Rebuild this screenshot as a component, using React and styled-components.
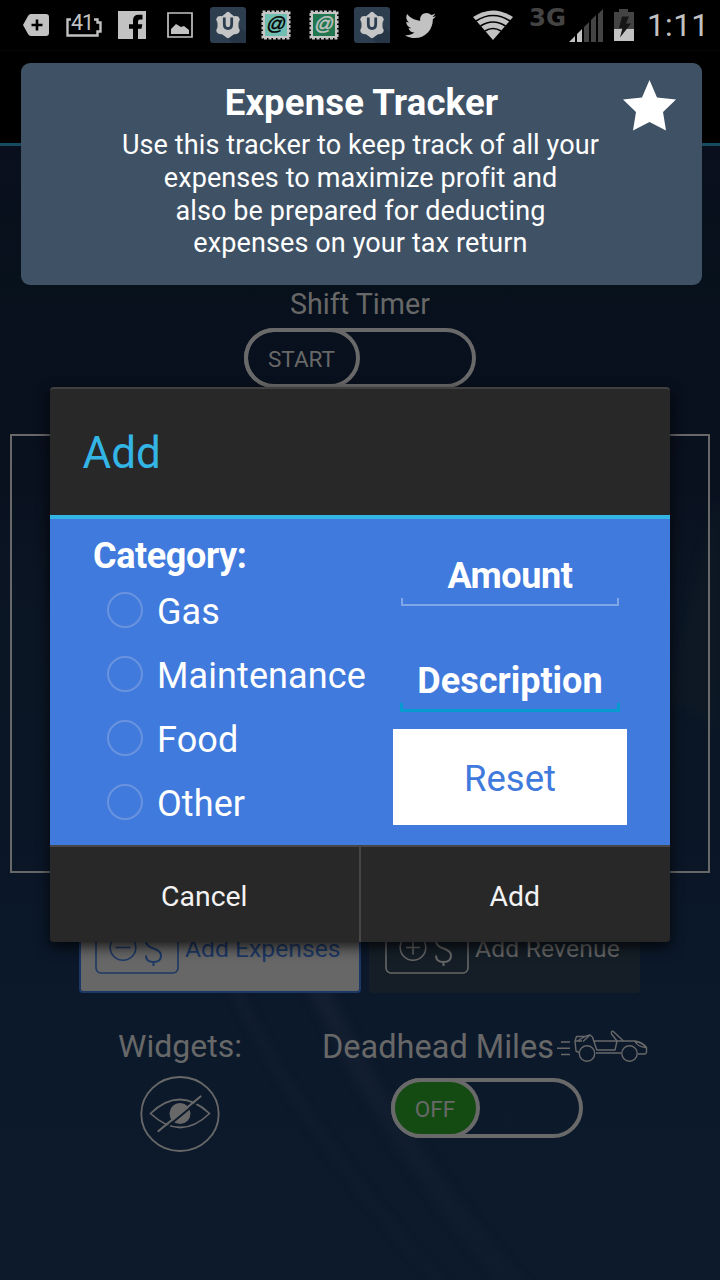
import React from "react";
import styled, { createGlobalStyle } from "styled-components";
import { FaTwitter } from "react-icons/fa";

const GlobalStyle = createGlobalStyle`
  *, *::before, *::after { box-sizing: border-box; }
  body { margin: 0; background: #000; font-family: Roboto, "Liberation Sans", sans-serif; }
  button { font-family: inherit; margin: 0; padding: 0; border: 0; background: none; }
  h1, h2, p { margin: 0; }
  svg { display: block; flex: none; }
`;

const Screen = styled.div`
  position: relative;
  display: flex;
  flex-direction: column;
  width: 720px;
  height: 1280px;
  overflow: hidden;
  background: #000;
`;

/* ---------- status bar ---------- */
const StatusBar = styled.header`
  display: flex;
  align-items: center;
  height: 51px;
  padding-left: 12px;
  border-bottom: 1px solid #070707;
  color: #c2c2c2;
`;
const StatusSlot = styled.span`
  display: flex;
  justify-content: center;
  width: 48px;
`;
const SystemIcons = styled.div`
  display: flex;
  align-items: center;
  margin-left: 29px;
`;
const IconGap = styled.span`
  width: ${(p) => p.$size}px;
`;
const Clock = styled.time`
  margin-left: 12px;
  font-size: 31.5px;
  line-height: 50px;
  font-weight: 400;
  letter-spacing: 0.4px;
  padding-top: 1px;
`;

/* ---------- page behind the dialog ---------- */
const ActionBar = styled.div`
  height: 95px;
  border-bottom: 3px solid #154a60;
`;
const Page = styled.main`
  position: relative;
  isolation: isolate;
  flex: 1;
  display: flex;
  flex-direction: column;
  align-items: center;
  padding-top: 142px;
  background: linear-gradient(#0a0f1d 0, #07111c 130px, #09101e 300px, #0b1624 480px, #0a1626 690px, #0c192b 860px, #0c1a2b 100%);
  color: #686868;
`;
const Backdrop = styled.svg`
  position: absolute;
  inset: 0;
  z-index: -1;
`;
const TimerLabel = styled.h2`
  font-size: 28.7px;
  line-height: 33px;
  font-weight: 400;
`;
const Toggle = styled.div`
  width: ${(p) => p.$width}px;
  height: 60px;
  margin-top: ${(p) => p.$top}px;
  border: 4px solid #696969;
  border-radius: 30px;
`;
const Knob = styled.div`
  display: flex;
  align-items: center;
  justify-content: center;
  width: ${(p) => p.$width}px;
  height: 60px;
  margin: -4px;
  padding: 2px 1px 0 0;
  border: 4px solid #696969;
  border-radius: 30px;
  background: ${(p) => p.$fill || "transparent"};
  font-size: 22.5px;
`;
const ListFrame = styled.section`
  width: 700px;
  height: 439px;
  margin-top: 46px;
  border: 2px solid #686868;
`;
const EntryButtons = styled.div`
  display: flex;
  gap: 8px;
  width: 561px;
  height: 88px;
  margin: 32px 1px 0 0;
`;
const EntryButton = styled.button`
  display: flex;
  align-items: center;
  gap: 6px;
  width: ${(p) => (p.$active ? 282 : 271)}px;
  padding-left: ${(p) => (p.$active ? 14 : 16)}px;
  border: ${(p) => (p.$active ? "2px solid #1b3765" : "0")};
  border-radius: 4px;
  background: ${(p) => (p.$active ? "#676767" : "#151e27")};
  color: ${(p) => (p.$active ? "#1c3866" : "#676767")};
  font-size: 24.7px;
  letter-spacing: ${(p) => (p.$active ? 0 : 0.15)}px;
`;
const EntryLabel = styled.span`
  padding-bottom: 2px;
`;
const Widgets = styled.div`
  display: flex;
  width: 720px;
  padding-top: 31px;
`;
const WidgetColumn = styled.div`
  display: flex;
  flex-direction: column;
  align-items: center;
  width: ${(p) => p.$width}px;
`;
const WidgetTitle = styled.h2`
  display: flex;
  align-items: center;
  gap: 2px;
  height: 44px;
  padding-top: ${(p) => p.$drop || 0}px;
  margin-bottom: ${(p) => p.$below || 0}px;
  margin-right: ${(p) => p.$shift || 0}px;
  white-space: nowrap;
  font-size: ${(p) => p.$size}px;
  font-weight: 400;
`;

/* ---------- overlays ---------- */
const Toast = styled.aside`
  position: absolute;
  left: 21px;
  top: 63px;
  width: 681px;
  height: 222px;
  padding-top: 19px;
  border-radius: 9px;
  background: #3f5265;
  color: #fff;
  text-align: center;
`;
const ToastTitle = styled.h1`
  font-size: 36.5px;
  line-height: 42px;
  font-weight: 700;
  letter-spacing: 0.15px;
`;
const ToastText = styled.p`
  margin-top: 5px;
  padding-right: 2px;
  font-size: 27px;
  line-height: 32.8px;
  letter-spacing: 0.11px;
`;
const ToastStar = styled.svg`
  position: absolute;
  left: 602px;
  top: 17px;
`;
const Dialog = styled.section`
  position: absolute;
  left: 50px;
  top: 387px;
  display: flex;
  flex-direction: column;
  width: 620px;
  height: 555px;
  border-radius: 4px;
  background: #282828;
  box-shadow: 0 5px 14px rgba(0, 0, 0, 0.75);
`;
const DialogTitle = styled.h1`
  height: 132px;
  padding-left: 32.5px;
  border-top: 2px solid #404040;
  border-bottom: 4px solid #33b5e5;
  border-radius: 4px 4px 0 0;
  color: #33b5e5;
  font-size: 44px;
  line-height: 128px;
  font-weight: 400;
`;
const DialogBody = styled.div`
  display: flex;
  height: 326px;
  padding: 16px 43px 0;
  background: #407add;
  color: #fff;
`;
const Categories = styled.div`
  width: 300px;
`;
const CategoryTitle = styled.h2`
  height: 44px;
  font-size: 36px;
  line-height: 43px;
  letter-spacing: -0.4px;
`;
const CategoryOption = styled.label`
  display: flex;
  align-items: center;
  gap: 14px;
  height: 64px;
  padding: 2px 0 0 14px;
  font-size: 36px;
  letter-spacing: 0.1px;
`;
const Radio = styled.span`
  width: 36px;
  height: 36px;
  margin-top: -4px;
  border: 2px solid #6993df;
  border-radius: 50%;
`;
const Fields = styled.div`
  display: flex;
  flex-direction: column;
  align-items: center;
  width: 234px;
  padding-top: 20px;
`;
const Field = styled.div`
  display: flex;
  flex-direction: column;
  align-items: center;
  height: ${(p) => p.$height}px;
  font-size: 36px;
  line-height: 42px;
  font-weight: 700;
  letter-spacing: ${(p) => p.$spacing || 0}px;
`;
const Underline = styled.span`
  width: ${(p) => (p.$focused ? 220 : 218)}px;
  height: ${(p) => (p.$focused ? 9 : 8)}px;
  margin-top: 1px;
  border: solid ${(p) => (p.$focused ? "#059bd0" : "#80a6e8")};
  border-width: ${(p) => (p.$focused ? "0 3px 3px" : "0 2px 2px")};
`;
const ResetButton = styled.button`
  width: 234px;
  height: 96px;
  padding-top: 3px;
  background: #fff;
  color: #407add;
  font-size: 36.5px;
`;
const DialogActions = styled.div`
  display: flex;
  height: 97px;
  border-top: 2px solid #464646;
`;
const DialogButton = styled.button`
  flex: 1;
  padding: 3px 1px 0 0;
  color: #f3f3f3;
  font-size: 28.4px;
  & + & { border-left: 2px solid #464646; margin-left: -1px; }
`;

function ShieldIcon() {
  return (
    <svg width="36" height="36" viewBox="0 0 36 36">
      <rect width="36" height="36" rx="3" fill="#2d3e50" />
      <path d="M18 31 29 19l7 7v10H23Z" fill="#273646" />
      <path d="M15.500 6.500Q18 3 20.500 6.500L24 9.200q5-.8 5.800 3.300L28.500 16v4l1.300 3.500q-.8 4.100-5.800 3.800L20.500 29.800q-2.500 2.800-5 0L12 27.300q-5 .3-5.800-3.800L7.500 20v-4l-1.300-3.500Q7 8.400 12 9.200Z" fill="#c5c5c5" />
      <path d="M14.300 10.500V17q0 4.500 3.700 4.500t3.700-4.500v-6.500" fill="none" stroke="#2d3e50" strokeWidth="2.800" />
    </svg>
  );
}

function StampIcon({ fill, ink }) {
  return (
    <svg width="30" height="30" viewBox="0 0 30 30">
      <rect x="2" y="2" width="26" height="26" fill="#c5c5c5" />
      <rect x="1.500" y="1.500" width="27" height="27" fill="none" stroke="#c5c5c5" strokeWidth="2" strokeDasharray="3 1.500" />
      <rect x="4" y="4" width="22" height="22" fill={fill} />
      <text transform="translate(14.500 20) skewX(-12)" textAnchor="middle" fontFamily="Liberation Sans, sans-serif" fontWeight="400" fontSize="19" fill={ink} stroke={ink} strokeWidth=".4">@</text>
    </svg>
  );
}

function MoneyIcon({ plus }) {
  return (
    <svg width="84" height="50" viewBox="0 0 84 50" fill="none" stroke="currentColor" strokeWidth="1.600">
      <rect x="1" y="1" width="82" height="48" rx="5" />
      <circle cx="28" cy="23.500" r="12.800" />
      <path d={plus ? "M21 23.500h14M28 16.500v14" : "M20.500 23.500h15"} />
      <path d="M66 17q0-7-7.500-7T51 17q0 5 7.500 7.500t7.500 7q0 6.500-7.500 6.500T51 31.500M58.500 5v5M58.500 38v4" strokeWidth="2" />
    </svg>
  );
}

function CarIcon() {
  return (
    <svg width="94" height="36" viewBox="0 0 94 36" fill="none" stroke="currentColor" strokeWidth="1.400" strokeLinejoin="round">
      <path d="M5 13h9M1 19.200h13M5 25.500h9" />
      <path d="M23 23.500 20 22 19 12l1.500-4.500H29L34 6l2.500 2 1.300 4 3 9H59l2-9-5.500-7Q55 1.500 57 2.300L67.500 12" />
      <path d="M19 12h7M22 11.500 29 7.500M27 12.500 34 6M37.500 12H79q8 1.500 11.500 6.500v5L89 25h-7M40 24h25" />
      <path d="M79 12.500q3 5.500 11 6-3-5-11-6Z" />
      <circle cx="31" cy="24.500" r="7.700" />
      <circle cx="73.500" cy="24.500" r="7.700" />
    </svg>
  );
}

function HiddenEyeIcon() {
  return (
    <svg width="80" height="78" viewBox="0 0 80 78" fill="none" stroke="currentColor">
      <ellipse cx="40" cy="39" rx="38.700" ry="37" strokeWidth="1.800" />
      <path d="M10.500 38.500q29-28 59 0-29 28-59 0Z" strokeWidth="1.700" />
      <circle cx="40" cy="38.500" r="10.500" fill="currentColor" stroke="none" />
      <path d="M20 57.800 62 23.300" stroke="#0c1a2b" strokeWidth="2" />
      <path d="M18.500 56 60.500 21.500" strokeWidth="2.200" strokeLinecap="round" />
    </svg>
  );
}

export default function App() {
  return (
    <Screen>
      <GlobalStyle />
      <StatusBar>
        <StatusSlot>
          <svg width="26" height="22" viewBox="0 0 26 22"><path d="M8 0h15q3 0 3 3v16q0 3-3 3H8q-2 0-3-2L0 11 5 2q1-2 3-2Z" fill="#c2c2c2" /><path d="M14 5.500v11M8.500 11h11" stroke="#000" strokeWidth="2.600" /></svg>
        </StatusSlot>
        <StatusSlot>
          <svg width="36" height="36" viewBox="0 -5 36 36"><path d="M5 7.500H1.500v16H31.500V19.500H34.500v-9H31.500V7.500H28" fill="none" stroke="#c2c2c2" strokeWidth="2.400" /><text x="5" y="18" fontSize="21.500" textLength="23" fill="#c2c2c2">41</text></svg>
        </StatusSlot>
        <StatusSlot>
          <svg width="28" height="28" viewBox="0 0 28 28"><path fill="#c2c2c2" d="M0 0h28v28H20V17.800h3.500l.8-4.600H20V10.500q0-2 2-2h2.500V3.800H20.500Q15 3.800 15 9.500v3.700h-4v4.600h4V28H0Z" /></svg>
        </StatusSlot>
        <StatusSlot>
          <svg width="26" height="26" viewBox="0 0 26 26"><path d="M1 1h24v24H1Z" fill="none" stroke="#c2c2c2" strokeWidth="1.700" /><path d="M4 22v-5l5-5 5 3 3-1 5 4v4Z" fill="#c2c2c2" /></svg>
        </StatusSlot>
        <StatusSlot><ShieldIcon /></StatusSlot>
        <StatusSlot><StampIcon fill="#70bdb2" ink="#000" /></StatusSlot>
        <StatusSlot><StampIcon fill="#217750" ink="#c2c2c2" /></StatusSlot>
        <StatusSlot><ShieldIcon /></StatusSlot>
        <StatusSlot><FaTwitter size={31} /></StatusSlot>
        <SystemIcons>
          <svg width="40" height="31" viewBox="0 0 40 31"><path d="M0 7Q20-6 40 7L20 30Z" fill="#c2c2c2" /><path d="M3 11q17-11 34 0M7.500 16q12.500-8 25 0M12 21q8-5 16 0" fill="none" stroke="#000" strokeWidth="1.700" /></svg>
          <IconGap $size={16} />
          <svg width="38" height="48" viewBox="0 -8 38 48"><text x="0" y="17" fontFamily="DejaVu Sans, sans-serif" fontSize="24" fontWeight="700" textLength="37" lengthAdjust="spacingAndGlyphs" fill="#444">3G</text></svg>
          <IconGap $size={2} />
          <svg width="35" height="33" viewBox="0 0 35 33"><path d="M0 33 6 27v6ZM8 25l5-5v13H8Z" fill="#c2c2c2" /><path d="M15 18l5-5v20h-5ZM22 11l5-5v27h-5ZM29 5l5-5v33h-5Z" fill="#444" /></svg>
          <IconGap $size={9} />
          <svg width="22" height="32" viewBox="0 0 22 32"><path d="M1 3h5V0h9v3h6v17H1Z" fill="#444" /><path d="M1 20h20v12H1Z" fill="#c2c2c2" /><path d="M9 7.500h7l-3 7h5L7 28.500l2.500-9.500H6Z" fill="#161616" /></svg>
        </SystemIcons>
        <Clock>1:11</Clock>
      </StatusBar>
      <ActionBar />
      <Page>
        <Backdrop width="720" height="1134" viewBox="0 146 720 1134" fill="none">
          <defs>
            <filter id="soft" x="-20%" y="-20%" width="140%" height="140%" colorInterpolationFilters="sRGB"><feGaussianBlur stdDeviation="5" /></filter>
            <linearGradient id="edge" x2="0" y2="1"><stop stopColor="#182334" stopOpacity=".8" /><stop offset="1" stopColor="#14202f" stopOpacity=".3" /></linearGradient>
          </defs>
          <path d="M215 940Q255 1050 349 1173T470 1300" stroke="url(#edge)" strokeWidth="6" filter="url(#soft)" />
          <path d="M290 920Q330 1030 404 1140T530 1300" stroke="url(#edge)" strokeWidth="20" filter="url(#soft)" />
          <path d="M720 500Q690 580 672 700L720 732Z" fill="#111b25" opacity=".5" filter="url(#soft)" />
        </Backdrop>
        <TimerLabel>Shift Timer</TimerLabel>
        <Toggle $width={232} $top={7}><Knob $width={116}>START</Knob></Toggle>
        <ListFrame />
        <EntryButtons>
          <EntryButton $active><MoneyIcon /><EntryLabel>Add Expenses</EntryLabel></EntryButton>
          <EntryButton><MoneyIcon plus /><EntryLabel>Add Revenue</EntryLabel></EntryButton>
        </EntryButtons>
        <Widgets>
          <WidgetColumn $width={360}>
            <WidgetTitle $size={32} $below={7}>Widgets:</WidgetTitle>
            <HiddenEyeIcon />
          </WidgetColumn>
          <WidgetColumn $width={254}>
            <WidgetTitle $size={32.5} $drop={2} $shift={2}>Deadhead Miles<CarIcon /></WidgetTitle>
            <Toggle $width={192} $top={10}><Knob $width={89} $fill="#144b13">OFF</Knob></Toggle>
          </WidgetColumn>
        </Widgets>
      </Page>

      <Toast>
        <ToastTitle>Expense Tracker</ToastTitle>
        <ToastText>
          Use this tracker to keep track of all your<br />
          expenses to maximize profit and<br />
          also be prepared for deducting<br />
          expenses on your tax return
        </ToastText>
        <ToastStar width="53" height="51" viewBox="0 0 53 51"><path fill="#fff" d="M26.500 0 34 17.500 53 19.500 40 32l3 18.500-16.500-8.500L10 50.500 13 32 0 19.500l19-2Z" /></ToastStar>
      </Toast>

      <Dialog role="dialog">
        <DialogTitle>Add</DialogTitle>
        <DialogBody>
          <Categories>
            <CategoryTitle>Category:</CategoryTitle>
            <CategoryOption><Radio />Gas</CategoryOption>
            <CategoryOption><Radio />Maintenance</CategoryOption>
            <CategoryOption><Radio />Food</CategoryOption>
            <CategoryOption><Radio />Other</CategoryOption>
          </Categories>
          <Fields>
            <Field $height={105} $spacing={-0.4}>
              <span>Amount</span>
              <Underline />
            </Field>
            <Field $height={69}>
              <span>Description</span>
              <Underline $focused />
            </Field>
            <ResetButton>Reset</ResetButton>
          </Fields>
        </DialogBody>
        <DialogActions>
          <DialogButton>Cancel</DialogButton>
          <DialogButton>Add</DialogButton>
        </DialogActions>
      </Dialog>
    </Screen>
  );
}
